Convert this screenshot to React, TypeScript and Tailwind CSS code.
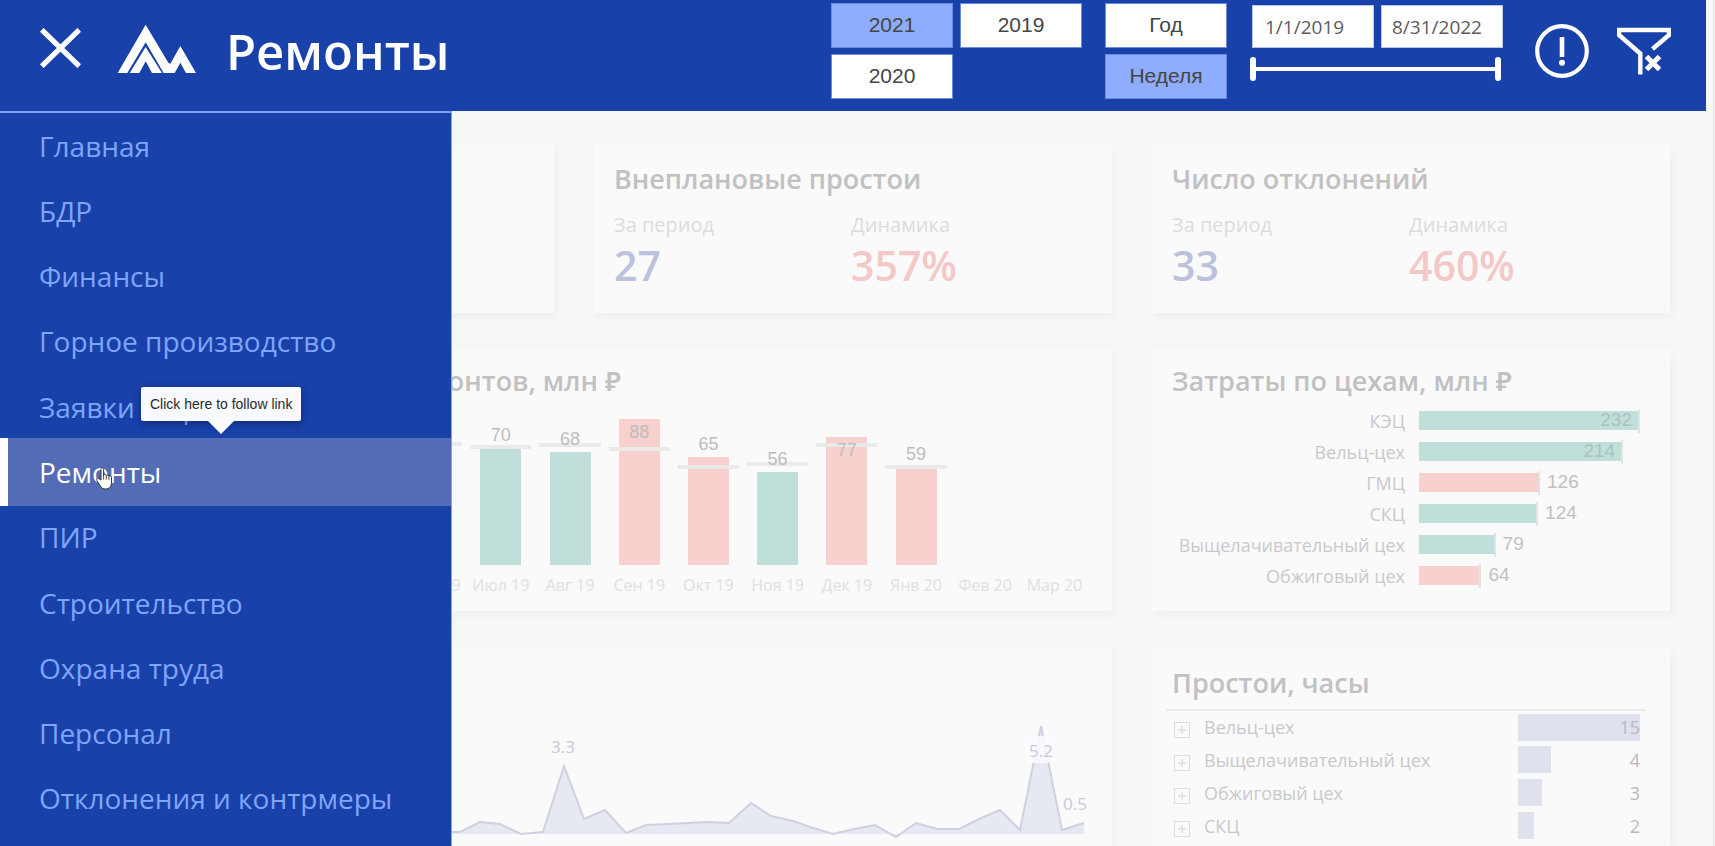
import { useState } from "react";
import type { ReactNode } from "react";

const MENU = [
  "Главная",
  "БДР",
  "Финансы",
  "Горное производство",
  "Заявки на ремонт",
  "Ремонты",
  "ПИР",
  "Строительство",
  "Охрана труда",
  "Персонал",
  "Отклонения и контрмеры",
];

const MONTHS: { label: string; value?: number; target?: number; over?: boolean }[] = [
  { label: "Июн 19", value: 93, target: 73, over: true },
  { label: "Июл 19", value: 70, target: 71 },
  { label: "Авг 19", value: 68, target: 72 },
  { label: "Сен 19", value: 88, target: 70, over: true },
  { label: "Окт 19", value: 65, target: 59, over: true },
  { label: "Ноя 19", value: 56, target: 61 },
  { label: "Дек 19", value: 77, target: 72, over: true },
  { label: "Янв 20", value: 59, target: 59, over: true },
  { label: "Фев 20" },
  { label: "Мар 20" },
];

const COSTS = [
  { name: "КЭЦ", value: 232, over: false },
  { name: "Вельц-цех", value: 214, over: false },
  { name: "ГМЦ", value: 126, over: true },
  { name: "СКЦ", value: 124, over: false },
  { name: "Выщелачивательный цех", value: 79, over: false },
  { name: "Обжиговый цех", value: 64, over: true },
];

const DOWNTIME = [
  { name: "Вельц-цех", value: 15 },
  { name: "Выщелачивательный цех", value: 4 },
  { name: "Обжиговый цех", value: 3 },
  { name: "СКЦ", value: 2 },
];

const LINE =
  "0,113 9,113 29,103 49,105 70,115 92,113 113,47 133,100 154,91 175,114 195,106 217,105 257,103 278,104 300,84 320,97 342,102 362,109 382,115 403,110 424,106 445,118 465,104 487,110 508,110 528,100 549,91 569,111 590,7 611,111 633,104";

function Card({ className = "", children }: { className?: string; children?: ReactNode }) {
  return (
    <section className={`bg-[#fafafa] shadow-[3px_5px_8px_rgba(60,40,90,0.03)] ${className}`}>
      {children}
    </section>
  );
}

function Title({ className = "", children }: { className?: string; children: ReactNode }) {
  return (
    <h2 className={`text-[27px] leading-8 font-semibold whitespace-nowrap text-[#c1c1c2] ${className}`}>
      {children}
    </h2>
  );
}

function Kpi({ title, total, trend }: { title: string; total: string; trend: string }) {
  return (
    <Card className="pt-[18px] pr-6 pb-[22px] pl-5">
      <Title>{title}</Title>
      <dl className="mt-4 grid grid-cols-2">
        <div>
          <dt className="text-xl leading-7 text-[#dcdcde]">За период</dt>
          <dd className="text-[41px] leading-[52px] font-semibold text-[#bcc2dd]">{total}</dd>
        </div>
        <div>
          <dt className="text-xl leading-7 text-[#dcdcde]">Динамика</dt>
          <dd className="text-[41px] leading-[52px] font-semibold text-[#f4c8c7]">{trend}</dd>
        </div>
      </dl>
    </Card>
  );
}

function Toggle({ active, onClick, children }: { active: boolean; onClick: () => void; children: ReactNode }) {
  return (
    <button
      type="button"
      aria-pressed={active}
      onClick={onClick}
      className={`h-[45px] w-[122px] border border-[#6c8bdc] pb-0.5 font-['Liberation_Sans',sans-serif] text-[21px] text-[#454545] ${
        active ? "bg-[#8fadfe]" : "bg-white"
      }`}
    >
      {children}
    </button>
  );
}

const RANGE =
  "pointer-events-none absolute inset-0 h-6 w-full appearance-none bg-transparent outline-none [&::-webkit-slider-thumb]:pointer-events-auto [&::-webkit-slider-thumb]:h-6 [&::-webkit-slider-thumb]:w-1.5 [&::-webkit-slider-thumb]:appearance-none [&::-webkit-slider-thumb]:rounded-[3px] [&::-webkit-slider-thumb]:bg-white";

function Header() {
  const [year, setYear] = useState("2021");
  const [step, setStep] = useState("Неделя");
  return (
    <header className="flex h-[111px] items-start bg-[#1941aa] pr-[35px] pl-10">
      <button type="button" aria-label="Закрыть меню" className="mt-7 h-10 w-[41px]">
        <svg viewBox="0 0 41 40" className="h-10 w-[41px]" fill="none" stroke="#fff" strokeWidth="5.2">
          <path d="M1.800 1.800 39.200 38.200M39.200 1.800 1.800 38.200" />
        </svg>
      </button>
      <svg viewBox="350 72 240 150" className="mt-6 ml-9 h-[50px] w-20" fill="#fff" aria-hidden="true">
        <path d="M352 219 436 74l68 114 6 3 30-53 47 81h-30l-17-31-17 31h-33L436 127l-55 92Z" />
        <path d="m388 219 48-78 49 78h-30l-19-35-19 35Z" />
      </svg>
      <h1 className="mt-4 ml-[29px] text-[49px] leading-[70px] font-semibold text-white">Ремонты</h1>

      <div className="ml-auto flex items-start">
        <div className="mt-[3px] grid grid-cols-2 gap-x-[7px] gap-y-1.5">
          {["2021", "2019", "2020"].map((y) => (
            <Toggle key={y} active={y === year} onClick={() => setYear(y)}>
              {y}
            </Toggle>
          ))}
        </div>
        <div className="mt-[3px] ml-[23px] grid gap-y-1.5">
          {["Год", "Неделя"].map((s) => (
            <Toggle key={s} active={s === step} onClick={() => setStep(s)}>
              {s}
            </Toggle>
          ))}
        </div>
        <div className="mt-[5px] ml-[23px]">
          <div className="flex gap-[7px] pl-0.5">
            <input
              aria-label="Начало периода"
              defaultValue="1/1/2019"
              className="h-[43px] w-[122px] border border-[#b9c6ea] bg-white px-3 text-[19px] text-[#5c5c5c]"
            />
            <input
              aria-label="Конец периода"
              defaultValue="8/31/2022"
              className="h-[43px] w-[122px] border border-[#b9c6ea] bg-white px-2.5 text-[19px] text-[#5c5c5c]"
            />
          </div>
          <div className="relative mt-[9px] flex h-6 w-[251px] items-center">
            <div className="h-1 w-full bg-white" />
            <input type="range" aria-label="С даты" min={0} max={100} defaultValue={0} className={RANGE} />
            <input type="range" aria-label="По дату" min={0} max={100} defaultValue={100} className={RANGE} />
          </div>
        </div>
        <button type="button" aria-label="Справка" className="mt-6 ml-8 size-[54px]">
          <svg viewBox="0 0 54 54" className="size-[54px]" fill="none" stroke="#fff">
            <circle cx="27" cy="27" r="24.8" strokeWidth="4.2" />
            <path d="M27 13v20" strokeWidth="4.6" />
            <circle cx="27" cy="38.7" r="3" fill="#fff" stroke="none" />
          </svg>
        </button>
        <button type="button" aria-label="Сбросить фильтры" className="mt-[27px] ml-7 h-[50px] w-[54px]">
          <svg viewBox="0 0 54 50" className="h-[50px] w-[54px]" fill="none" stroke="#fff">
            <path d="M23.3 47.5V26.5L2 8V3h50v5L35.5 22" strokeWidth="4.4" />
            <path d="m29.5 29.5 13 13m0-13-13 13" strokeWidth="5" />
          </svg>
        </button>
      </div>
    </header>
  );
}

function Tooltip() {
  return (
    <div
      role="tooltip"
      className="absolute top-[-51px] left-[133px] z-10 rounded-xs bg-white/97 px-[9px] py-[7px] font-['Liberation_Sans',sans-serif] text-sm leading-5 whitespace-nowrap text-[#2a2a2a] shadow-[0_2px_8px_rgba(0,0,0,0.35)]"
    >
      Click here to follow link
      <svg viewBox="0 0 26 13" className="absolute top-full left-1/2 h-[13px] w-[26px] -translate-x-1/2" fill="#fff">
        <path d="M0 0h26L13 13Z" />
      </svg>
    </div>
  );
}

function HandCursor() {
  return (
    <svg viewBox="0 0 17 23" className="absolute top-[29px] left-[88px] h-[23px] w-[17px]" aria-hidden="true">
      <path
        d="M5 13V2.3C5 .3 7.6.3 7.6 2.3V8c.6-1 2.6-.8 2.7.5.7-.8 2.4-.6 2.6.8.8-.7 2.6-.3 2.6 1.3v4.6c0 4.3-2.2 6.800-5.800 6.800-2.700 0-4.200-1-5.400-3L1 13.800c-1-1.700.9-3.200 2.300-1.800Z"
        fill="#fff"
        stroke="#333"
        strokeWidth="1"
      />
      <path d="M7.600 8v4.500M10.300 8.600v4M12.900 9.500v3.300" stroke="#333" strokeWidth=".9" />
    </svg>
  );
}

function Menu() {
  return (
    <nav className="absolute top-[111px] bottom-0 left-0 w-[452px] border-t-2 border-r border-[#7fa2f5] bg-[#1941aa] pb-[15px]">
      <ul className="grid h-full auto-rows-[minmax(0,1fr)]">
        {MENU.map((item) => {
          const active = item === "Ремонты";
          return (
            <li key={item} className="flex min-h-0 items-center">
              <a
                href="#"
                aria-current={active ? "page" : undefined}
                className={`flex w-full items-center border-l-8 pl-[31px] text-[28px] whitespace-nowrap ${
                  active ? "relative h-[68px] border-white bg-[#526db5] text-white" : "h-14 border-transparent text-[#7fa5fb]"
                }`}
              >
                {item}
                {active && <Tooltip />}
                {active && <HandCursor />}
              </a>
            </li>
          );
        })}
      </ul>
    </nav>
  );
}

function MonthlyChart() {
  return (
    <Card className="col-span-2 pr-[23px] pb-4 pl-[15px] pt-4">
      <Title className="w-[570px] text-right">Динамика ремонтов, млн ₽</Title>
      <div className="mt-0.5 ml-auto flex w-2/3">
        {MONTHS.map((m) => (
          <div key={m.label} className="flex-1">
            <div className="relative flex h-[166px] items-end justify-center">
              {m.value && (
                <>
                  <div
                    className={`w-[41px] ${m.over ? "bg-[#f8d1cf]" : "bg-[#c0dfda]"}`}
                    style={{ height: `${m.value}%` }}
                  />
                  <div
                    className="absolute inset-x-1 h-1 translate-y-1/2 bg-[#eaeaea]"
                    style={{ bottom: `${m.target}%` }}
                  />
                  <span
                    className="absolute inset-x-0 text-center font-['Liberation_Sans',sans-serif] text-lg leading-5 text-[#bdbdbd]"
                    style={{ bottom: `${m.value > 75 ? m.value - 14 : m.value + 2}%` }}
                  >
                    {m.value}
                  </span>
                </>
              )}
            </div>
            <div className="mt-2.5 text-center text-base leading-5 whitespace-nowrap text-[#e0e0e3]">{m.label}</div>
          </div>
        ))}
      </div>
    </Card>
  );
}

function CostChart() {
  return (
    <Card className="pt-4 pr-[30px] pl-5">
      <Title>Затраты по цехам, млн ₽</Title>
      <ul className="mt-2">
        {COSTS.map((c) => (
          <li key={c.name} className="flex h-[31px] items-center">
            <span className="w-[233px] shrink-0 text-right text-lg leading-6 whitespace-nowrap text-[#c9c9cb]">
              {c.name}
            </span>
            <div className="ml-3.5 flex flex-1 items-center font-['Liberation_Sans',sans-serif] text-[19px] text-[#c1c1c3]">
              <div
                className={`flex h-[19px] items-center justify-end pr-1.5 ${c.over ? "bg-[#f8d1cf]" : "bg-[#c0dfda]"}`}
                style={{ width: `${(c.value / 234) * 100}%` }}
              >
                {c.value > 200 && <span className="text-[#a9c4c0]">{c.value}</span>}
              </div>
              <div className="h-6 w-0.5 shrink-0 bg-[#e2e4e4]" />
              {c.value <= 200 && <span className="ml-[7px]">{c.value}</span>}
            </div>
          </li>
        ))}
      </ul>
    </Card>
  );
}

function TrendChart() {
  return (
    <Card className="col-span-2 pt-[72px] pr-7">
      <svg
        viewBox="0 0 633 126"
        className="ml-auto h-[126px] w-[633px] overflow-visible"
        role="img"
        aria-label="Простои по неделям"
      >
        <polygon points={`0,115 ${LINE} 633,115`} fill="#e6e8f2" />
        <polyline points={LINE} fill="none" stroke="#cfd1e2" strokeWidth="2" />
        <rect x="576" y="17" width="28" height="27" fill="#fafafe" opacity=".85" />
        <g fill="#c9c9da" fontSize="17" textAnchor="middle">
          <text x="112" y="34">3.3</text>
          <text x="590" y="38">5.2</text>
          <text x="624" y="91">0.5</text>
        </g>
      </svg>
    </Card>
  );
}

function DowntimeTable() {
  return (
    <Card className="pt-5 pr-6 pl-3.5">
      <Title className="pl-1.5">Простои, часы</Title>
      <table className="mt-2.5 w-full border-t-2 border-[#ececed] text-lg leading-6">
        <tbody>
          {DOWNTIME.map((d) => (
            <tr key={d.name} className="h-[33px]">
              <td className="w-[38px] p-0 pl-2">
                <button
                  type="button"
                  aria-label={`Развернуть ${d.name}`}
                  className="mt-1.5 block size-4 border border-[#dedee0]"
                >
                  <svg viewBox="0 0 14 14" className="size-3.5" stroke="#d2d2d5">
                    <path d="M7 3v8M3 7h8" />
                  </svg>
                </button>
              </td>
              <td className="p-0 whitespace-nowrap text-[#c9c9cb]">{d.name}</td>
              <td className="w-[128px] p-0 pr-1.5">
                <div className="relative flex h-[27px] items-center justify-end font-medium text-[#b9b9be]">
                  <div
                    className="absolute inset-y-0 left-0 bg-[#dfe1ef]"
                    style={{ width: `${(d.value / 15) * 100}%` }}
                  />
                  <span className="relative">{d.value}</span>
                </div>
              </td>
            </tr>
          ))}
        </tbody>
      </table>
    </Card>
  );
}

export default function App() {
  return (
    <div className="h-screen overflow-hidden bg-[#f7f7f7] pr-px font-['Open_Sans','Noto_Sans',sans-serif]">
      <div className="relative flex h-full flex-col border-r border-[#e4e4e4] pr-[7px]">
        <Header />
        <main className="grid flex-1 grid-cols-3 grid-rows-[auto_auto_1fr] gap-x-10 gap-y-9 px-9 pt-[34px]">
          <Card />
          <Kpi title="Внеплановые простои" total="27" trend="357%" />
          <Kpi title="Число отклонений" total="33" trend="460%" />
          <MonthlyChart />
          <CostChart />
          <TrendChart />
          <DowntimeTable />
        </main>
        <Menu />
      </div>
    </div>
  );
}
